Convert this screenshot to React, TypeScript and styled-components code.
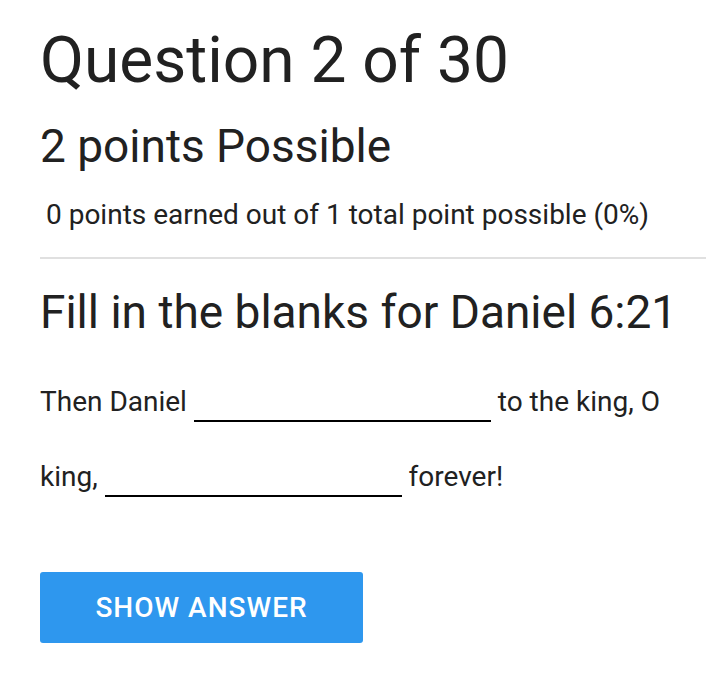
import styled, { createGlobalStyle } from "styled-components";

const GlobalStyle = createGlobalStyle`
  body {
    margin: 0;
    background: #fff;
    font-family: Roboto, "Liberation Sans", sans-serif;
    color: #212121;
  }
`;

export default function App() {
  return (
    <Page>
      <GlobalStyle />
      <Title>Question 2 of 30</Title>
      <Points>2 points Possible</Points>
      <Earned>0 points earned out of 1 total point possible (0%)</Earned>
      <Divider />
      <Prompt>Fill in the blanks for Daniel 6:21</Prompt>
      <Verse>
        Then Daniel <Blank /> to the king, O king, <Blank /> forever!
      </Verse>
      <AnswerButton>Show Answer</AnswerButton>
    </Page>
  );
}

const Page = styled.div`
  padding: 23px 20px 30px 40px;
`;

const Title = styled.h1`
  margin: 0;
  font-size: 64px;
  font-weight: 400;
  line-height: 76px;
`;

const Points = styled.h2`
  margin: 20px 0 0;
  font-size: 46px;
  font-weight: 400;
  line-height: 54px;
`;

const Earned = styled.p`
  margin: 26px 0 0 6px;
  font-size: 28px;
  line-height: 32px;
`;

const Divider = styled.hr`
  margin: 26px 0 0;
  border: none;
  border-top: 2px solid #e0e0e0;
`;

const Prompt = styled.h3`
  margin: 26px 0 0;
  font-size: 46px;
  font-weight: 400;
  line-height: 54px;
`;

const Verse = styled.p`
  margin: 25px 0 0;
  width: 640px;
  font-size: 28px;
  line-height: 75px;
`;

const Blank = styled.span`
  display: inline-block;
  width: 297px;
  height: 2px;
  background: #000;
  vertical-align: -11px;
`;

const AnswerButton = styled.button`
  display: block;
  margin-top: 58px;
  width: 323px;
  height: 71px;
  padding: 0;
  border: none;
  border-radius: 3px;
  background: #2e97ee;
  color: #fff;
  font-family: Roboto, "Liberation Sans", sans-serif;
  font-size: 28px;
  font-weight: 500;
  text-transform: uppercase;
  letter-spacing: 1px;
`;
